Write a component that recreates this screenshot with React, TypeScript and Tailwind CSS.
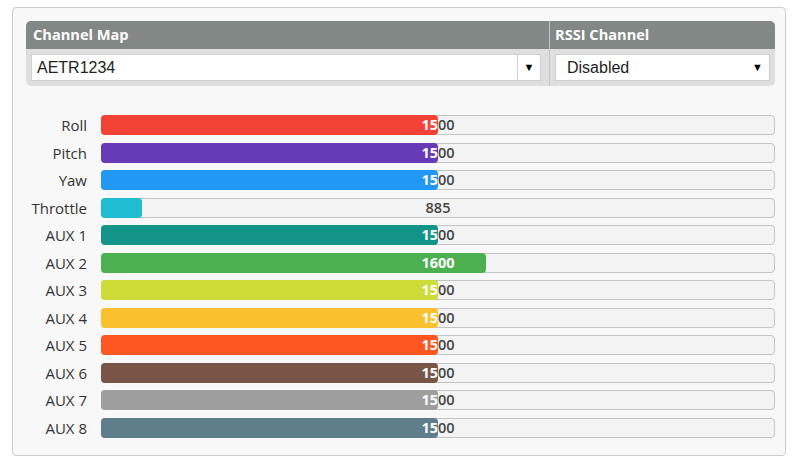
import React from 'react'

type Channel = {
  name: string
  value: number
  color: string
}

const channels: Channel[] = [
  { name: 'Roll', value: 1500, color: 'bg-[#f44336]' },
  { name: 'Pitch', value: 1500, color: 'bg-[#673ab7]' },
  { name: 'Yaw', value: 1500, color: 'bg-[#2196f3]' },
  { name: 'Throttle', value: 885, color: 'bg-[#1fbcd2]' },
  { name: 'AUX 1', value: 1500, color: 'bg-[#129488]' },
  { name: 'AUX 2', value: 1600, color: 'bg-[#4caf50]' },
  { name: 'AUX 3', value: 1500, color: 'bg-[#cddc39]' },
  { name: 'AUX 4', value: 1500, color: 'bg-[#fbc02d]' },
  { name: 'AUX 5', value: 1500, color: 'bg-[#ff5722]' },
  { name: 'AUX 6', value: 1500, color: 'bg-[#795548]' },
  { name: 'AUX 7', value: 1500, color: 'bg-[#9e9e9e]' },
  { name: 'AUX 8', value: 1500, color: 'bg-[#607d8b]' },
]

const BAR_WIDTH = 674

function Meter({ value, color }: { value: number; color: string }) {
  const fill = ((value - 800) / 1400) * BAR_WIDTH

  return (
    <div className="relative h-[20px] w-[674px] rounded-[4px] border border-[#c4c4c4] bg-[#f3f3f3]">
      {/* dark label behind the fill */}
      <div className="absolute -inset-px flex items-center justify-center text-[14.5px] font-semibold text-[#444]">
        {value}
      </div>
      {/* coloured fill, white label clipped to it */}
      <div
        className={`absolute -top-px -bottom-px -left-px overflow-hidden rounded-[4px] ${color}`}
        style={{ width: fill }}
      >
        <div className="absolute inset-y-0 left-0 flex w-[674px] items-center justify-center text-[14.5px] font-bold text-white">
          {value}
        </div>
      </div>
    </div>
  )
}

function SelectBox({ value, split }: { value: string; split?: boolean }) {
  return (
    <div className="flex h-[27px] w-full items-center border border-[#cfcfcf] bg-white font-['Liberation_Sans',Arial,sans-serif] text-[16px] text-[#222]">
      <span className={split ? 'flex-1 pl-[5px]' : 'flex-1 pl-[11px]'}>{value}</span>
      <span
        className={
          split
            ? 'flex h-full w-[23px] items-center justify-center border-l border-[#cfcfcf] text-[11px] text-black'
            : 'flex h-full w-[23px] items-center justify-center text-[11px] text-black'
        }
      >
        ▼
      </span>
    </div>
  )
}

export default function App() {
  return (
    <div className="min-h-[464px] bg-white pl-[12px] pt-[7px] font-['Open_Sans',sans-serif]">
      <div className="h-[449px] w-[774px] rounded-[4px] border border-[#cccccc] bg-[#f8f8f8] pl-[13px] pt-[13px]">
        {/* Channel map / RSSI table */}
        <div className="flex w-[749px] overflow-hidden rounded-[5px] bg-[#dfdfdf]">
          <div className="w-[523px]">
            <div className="flex h-[28px] items-center bg-[#828885] pl-[7px] text-[14.6px] font-bold text-white">
              Channel Map
            </div>
            <div className="h-[37px] pl-[5px] pr-[8px] pt-[5px]">
              <SelectBox value="AETR1234" split />
            </div>
          </div>
          <div className="flex-1 border-l border-[#c4c6c5]">
            <div className="flex h-[28px] items-center bg-[#828885] pl-[5px] text-[14.6px] font-bold text-white">
              RSSI Channel
            </div>
            <div className="h-[37px] pl-[5px] pr-[5px] pt-[5px]">
              <SelectBox value="Disabled" />
            </div>
          </div>
        </div>

        {/* Channel bars */}
        <div className="mt-[29px] flex flex-col">
          {channels.map((ch) => (
            <div key={ch.name} className="flex h-[27.5px] items-start">
              <div className="w-[62px] pr-px text-right text-[15px] leading-[20px] text-[#333]">
                {ch.name}
              </div>
              <div className="ml-[13px]">
                <Meter value={ch.value} color={ch.color} />
              </div>
            </div>
          ))}
        </div>
      </div>
    </div>
  )
}
